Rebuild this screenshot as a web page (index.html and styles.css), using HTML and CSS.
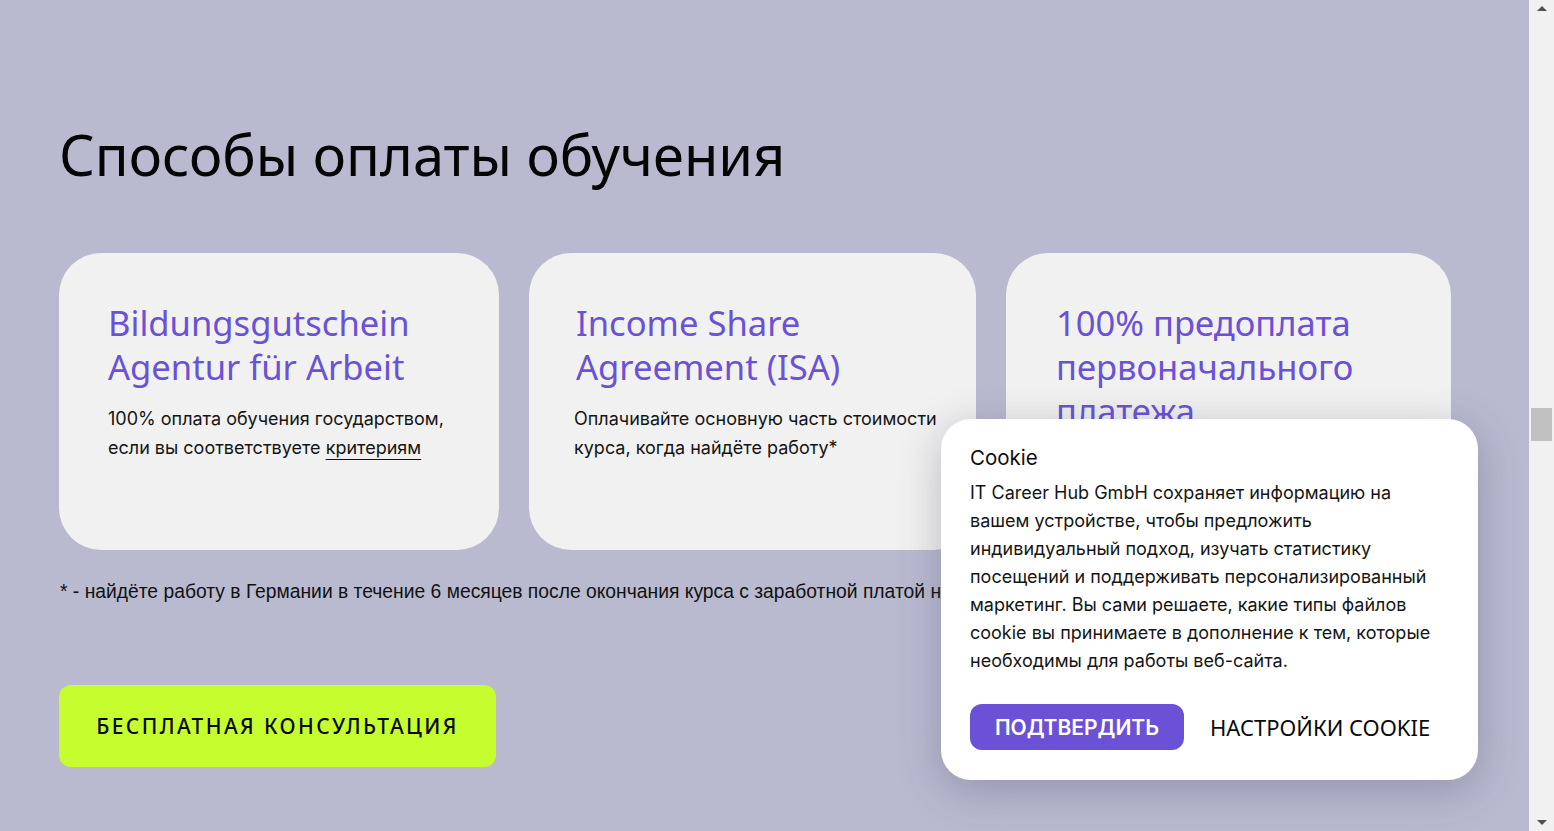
FILE: index.html
```html
<!DOCTYPE html>
<html lang="ru">
<head>
<meta charset="utf-8">
<title>Способы оплаты обучения</title>
<link rel="stylesheet" href="styles.css">
</head>
<body>
<div class="viewport">
  <main class="page">
    <section class="payment">
      <h1 class="payment__title">Способы оплаты обучения</h1>
      <div class="cards">
        <article class="card">
          <h2 class="card__title">Bildungsgutschein Agentur für Arbeit</h2>
          <p class="card__text">100% оплата обучения государством, если вы соответствуете <a class="card__link" href="#">критериям</a></p>
        </article>
        <article class="card">
          <h2 class="card__title">Income Share Agreement (ISA)</h2>
          <p class="card__text">Оплачивайте основную часть стоимости курса, когда найдёте работу*</p>
        </article>
        <article class="card">
          <h2 class="card__title">100% предоплата первоначального платежа</h2>
          <p class="card__text">Оплатите обучение полностью до начала курса и получите скидку</p>
        </article>
      </div>
      <p class="footnote">* - найдёте работу в Германии в течение 6 месяцев после окончания курса с заработной платой не менее 2 500 € брутто</p>
      <a class="cta" href="#">Бесплатная консультация</a>
    </section>

    <div class="cookie">
      <h3 class="cookie__title">Cookie</h3>
      <p class="cookie__text">IT Career Hub GmbH сохраняет информацию на вашем устройстве, чтобы предложить индивидуальный подход, изучать статистику посещений и поддерживать персонализированный маркетинг. Вы сами решаете, какие типы файлов cookie вы принимаете в дополнение к тем, которые необходимы для работы веб-сайта.</p>
      <div class="cookie__actions">
        <button class="cookie__accept" type="button">Подтвердить</button>
        <button class="cookie__settings" type="button">Настройки cookie</button>
      </div>
    </div>
  </main>

  <div class="scrollbar" aria-hidden="true">
    <div class="scrollbar__arrow scrollbar__arrow--up"></div>
    <div class="scrollbar__track">
      <div class="scrollbar__thumb"></div>
    </div>
    <div class="scrollbar__arrow scrollbar__arrow--down"></div>
  </div>
</div>
</body>
</html>
```

FILE: styles.css
```css
* {
  box-sizing: border-box;
}

html,
body {
  margin: 0;
  height: 100%;
  overflow: hidden;
}

body {
  font-family: Inter, "Noto Sans", sans-serif;
  color: #111;
  background: #b9bad0;
}

.viewport {
  display: flex;
  height: 100%;
}

.page {
  position: relative;
  flex: 1;
  background: #b9bad0;
  overflow: hidden;
}

.payment {
  padding: 114px 0 0 59px;
  width: 1451px;
}

.payment__title {
  margin: 0 0 0 0;
  font-family: "Noto Sans", sans-serif;
  font-weight: 400;
  font-size: 56px;
  line-height: 80px;
  color: #050505;
}

.cards {
  display: grid;
  grid-template-columns: 440px 447px 1fr;
  gap: 30px;
  margin-top: 59px;
}

.card {
  background: #f1f1f1;
  border-radius: 42px;
  padding: 48px 30px 44px 49px;
  height: 297px;
  overflow: hidden;
}

.card:nth-child(2) {
  padding-left: 47px;
}

.card:nth-child(3) {
  padding-left: 50px;
}

.card__title {
  margin: 0;
  font-family: "Noto Sans", sans-serif;
  font-weight: 400;
  font-size: 34.6px;
  line-height: 44px;
  color: #6a51d6;
}

.card__text {
  margin: 15px 0 0;
  font-size: 18px;
  line-height: 29px;
  color: #151515;
}

.card:nth-child(2) .card__text {
  margin-left: -2px;
}

.card__link {
  color: inherit;
  text-decoration: underline;
  text-underline-offset: 5px;
  text-decoration-thickness: 1px;
}

.footnote {
  margin: 30px 0 0 1px;
  font-family: "Liberation Sans", Arial, sans-serif;
  font-size: 19.3px;
  line-height: 24px;
  color: #111;
  white-space: nowrap;
}

.cta {
  display: flex;
  align-items: center;
  justify-content: center;
  width: 437px;
  height: 82px;
  margin-top: 81px;
  border-radius: 12px;
  background: #c6fd2f;
  color: #0a0a0a;
  text-decoration: none;
  text-transform: uppercase;
  font-family: "Noto Sans", sans-serif;
  font-weight: 500;
  font-size: 21px;
  letter-spacing: 2.4px;
}

.cookie {
  position: absolute;
  right: 51px;
  bottom: 51px;
  width: 537px;
  height: 361px;
  padding: 24px 29px 0;
  background: #fff;
  border-radius: 30px;
  box-shadow: 0 10px 44px rgba(60, 60, 90, 0.3);
}

.cookie__title {
  margin: 0;
  font-size: 20.5px;
  font-weight: 400;
  line-height: 30px;
  color: #0d0d0d;
}

.cookie__text {
  margin: 6px 0 0;
  font-size: 18px;
  line-height: 28px;
  color: #151515;
}

.cookie__actions {
  display: flex;
  align-items: center;
  gap: 26px;
  margin-top: 29px;
}

.cookie__accept {
  width: 214px;
  height: 46px;
  border: 0;
  border-radius: 12px;
  background: #6a51d6;
  color: #fff;
  font-family: Inter, sans-serif;
  font-weight: 600;
  font-size: 21px;
  text-transform: uppercase;
  cursor: pointer;
}

.cookie__settings {
  border: 0;
  padding: 0;
  background: none;
  color: #0a0a0a;
  font-family: "Noto Sans", sans-serif;
  font-size: 22px;
  text-transform: uppercase;
  cursor: pointer;
}

.scrollbar {
  display: flex;
  flex-direction: column;
  width: 25px;
  background: #f1f1f1;
}

.scrollbar__arrow {
  height: 17px;
  display: flex;
  align-items: center;
  justify-content: center;
}

.scrollbar__arrow::before {
  content: "";
  border-left: 5px solid transparent;
  border-right: 5px solid transparent;
}

.scrollbar__arrow--up::before {
  border-bottom: 5px solid #505050;
}

.scrollbar__arrow--down::before {
  border-top: 5px solid #505050;
}

.scrollbar__track {
  flex: 1;
  padding: 391px 2px 0 2px;
}

.scrollbar__thumb {
  height: 33px;
  background: #c1c1c1;
}
```
